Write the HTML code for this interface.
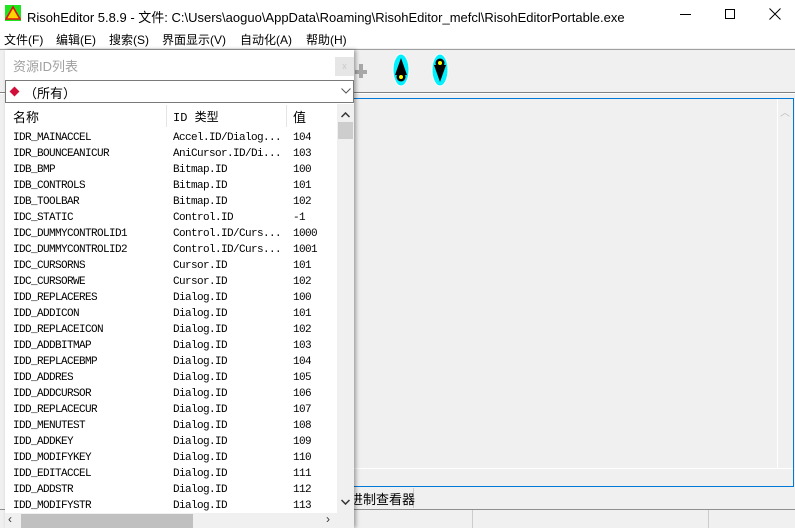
<!DOCTYPE html>
<html><head><meta charset="utf-8"><style>
*{margin:0;padding:0;box-sizing:border-box}
body{width:795px;height:528px;overflow:hidden;background:#f0f0f0;font-family:"Liberation Sans","Noto Sans CJK SC",sans-serif;font-size:12px;color:#000;position:relative}
.abs{position:absolute;white-space:nowrap}
.mono{font-family:"Liberation Mono","Noto Sans CJK SC",monospace;font-size:11px;letter-spacing:-0.6px}
.row{position:absolute;left:0;height:16px;line-height:16px;width:330px}
.row span{position:absolute}
</style></head><body>
<div class="abs" style="left:0;top:0;width:795px;height:30px;background:#fff"></div>
<svg class="abs" style="left:5px;top:5px" width="16" height="16"><rect width="16" height="16" fill="#1ee51e"/><polygon points="8,2 15,14 1,14" fill="#ffd400" stroke="#e01010" stroke-width="1.6"/></svg>
<div class="abs" style="left:27px;top:7px;font-size:13px">RisohEditor 5.8.9 - 文件: C:\Users\aoguo\AppData\Roaming\RisohEditor_mefcl\RisohEditorPortable.exe</div>
<div class="abs" style="left:680px;top:14px;width:11px;height:1px;background:#000"></div>
<div class="abs" style="left:725px;top:9px;width:10px;height:10px;border:1px solid #000"></div>
<svg class="abs" style="left:769px;top:8px" width="12" height="12"><path d="M0.5 0.5L11.5 11.5M11.5 0.5L0.5 11.5" stroke="#000" stroke-width="1"/></svg>
<div class="abs" style="left:0;top:30px;width:795px;height:18px;background:#fff"></div>
<div class="abs" style="left:4px;top:31px">文件(F)</div>
<div class="abs" style="left:56px;top:31px">编辑(E)</div>
<div class="abs" style="left:109px;top:31px">搜索(S)</div>
<div class="abs" style="left:162px;top:31px">界面显示(V)</div>
<div class="abs" style="left:240px;top:31px">自动化(A)</div>
<div class="abs" style="left:306px;top:31px">帮助(H)</div>
<div class="abs" style="left:0;top:49px;width:795px;height:1px;background:#a0a0a0"></div>
<div class="abs" style="left:355px;top:70px;width:12px;height:4px;background:#a8a8a8"></div>
<div class="abs" style="left:359px;top:64px;width:4px;height:14px;background:#a8a8a8"></div>
<svg class="abs" style="left:392px;top:53px" width="18" height="34"><ellipse cx="9" cy="17" rx="8" ry="16" fill="#00f0ff" stroke="#fff"/><polygon points="9,5 15,22 3,22" fill="#000"/><circle cx="9" cy="24" r="4.5" fill="#000"/><circle cx="9" cy="24" r="2" fill="#ff0"/></svg>
<svg class="abs" style="left:431px;top:53px" width="18" height="34"><ellipse cx="9" cy="17" rx="8" ry="16" fill="#00f0ff" stroke="#fff"/><polygon points="9,29 15,12 3,12" fill="#000"/><circle cx="9" cy="10" r="4.5" fill="#000"/><circle cx="9" cy="10" r="2" fill="#ff0"/></svg>
<div class="abs" style="left:0;top:92px;width:795px;height:1px;background:#808080"></div>
<div class="abs" style="left:0;top:93px;width:795px;height:1px;background:#fff"></div>
<div class="abs" style="left:350px;top:98px;width:444px;height:389px;border:1px solid #0078d7;background:#f0f0f0"></div>
<div class="abs" style="left:777px;top:99px;width:16px;height:370px;background:#f0f0f0;border-left:1px solid #fff"></div>
<div class="abs" style="left:780px;top:104px;color:#bbb;font-size:10px">︿</div>
<div class="abs" style="left:351px;top:468px;width:442px;height:1px;background:#fff"></div>
<div class="abs" style="left:340px;top:488px;width:74px;height:20px;border-right:1px solid #ccc;font-size:13px;padding-top:1px;padding-left:10px">进制查看器</div>
<div class="abs" style="left:0;top:509px;width:795px;height:1px;background:#909090"></div>
<div class="abs" style="left:472px;top:510px;width:1px;height:18px;background:#ccc"></div>
<div class="abs" style="left:708px;top:510px;width:1px;height:18px;background:#ccc"></div>
<div class="abs" style="left:5px;top:50px;width:349px;height:478px;background:#fff;box-shadow:2px 0 4px rgba(0,0,0,0.35)"></div>
<div class="abs" style="left:13px;top:56px;font-size:13px;color:#a0a0a0">资源ID列表</div>
<div class="abs" style="left:335px;top:57px;width:19px;height:19px;background:#e6e6e6;color:#c8c8c8;font-size:9px;text-align:center;line-height:18px">x</div>
<div class="abs" style="left:5px;top:80px;width:349px;height:23px;border:1px solid #7a7a7a;background:#fff"></div>
<div class="abs" style="left:11px;top:88px;width:7px;height:7px;background:#d0103a;transform:rotate(45deg)"></div>
<div class="abs" style="left:24px;top:83px;font-size:13px">（所有）</div>
<svg class="abs" style="left:341px;top:88px" width="10" height="6"><path d="M0.5 0.5L5 5L9.5 0.5" stroke="#555" fill="none"/></svg>
<div class="abs" style="left:5px;top:104px;width:349px;height:24px;background:#fff"></div>
<div class="abs" style="left:166px;top:105px;width:1px;height:22px;background:#e5e5e5"></div>
<div class="abs" style="left:286px;top:105px;width:1px;height:22px;background:#e5e5e5"></div>
<div class="abs" style="left:13px;top:107px;font-size:13px">名称</div>
<div class="abs mono" style="left:173px;top:108px;font-size:12px;letter-spacing:0">ID 类型</div>
<div class="abs" style="left:293px;top:107px;font-size:13px">值</div>
<div class="abs" style="left:337px;top:104px;width:17px;height:409px;background:#f0f0f0"></div>
<svg class="abs" style="left:341px;top:112px" width="9" height="6"><path d="M0.5 5L4.5 1L8.5 5" stroke="#333" stroke-width="1.5" fill="none"/></svg>
<div class="abs" style="left:338px;top:122px;width:15px;height:17px;background:#cdcdcd"></div>
<svg class="abs" style="left:341px;top:499px" width="9" height="6"><path d="M0.5 1L4.5 5L8.5 1" stroke="#333" stroke-width="1.5" fill="none"/></svg>
<div class="abs" style="left:5px;top:513px;width:349px;height:15px;background:#f0f0f0"></div>
<div class="abs" style="left:21px;top:514px;width:172px;height:14px;background:#c0c0c0"></div>
<div class="abs" style="left:8px;top:512px;font-size:12px;color:#333">‹</div>
<div class="abs" style="left:326px;top:512px;font-size:12px;color:#333">›</div>
<div class="abs mono" style="left:13px;top:130px;width:324px;height:383px;overflow:hidden">
<div class="row" style="top:0"><span style="left:0">IDR_MAINACCEL</span><span style="left:160px">Accel.ID/Dialog...</span><span style="left:280px">104</span></div>
<div class="row" style="top:16px"><span style="left:0">IDR_BOUNCEANICUR</span><span style="left:160px">AniCursor.ID/Di...</span><span style="left:280px">103</span></div>
<div class="row" style="top:32px"><span style="left:0">IDB_BMP</span><span style="left:160px">Bitmap.ID</span><span style="left:280px">100</span></div>
<div class="row" style="top:48px"><span style="left:0">IDB_CONTROLS</span><span style="left:160px">Bitmap.ID</span><span style="left:280px">101</span></div>
<div class="row" style="top:64px"><span style="left:0">IDB_TOOLBAR</span><span style="left:160px">Bitmap.ID</span><span style="left:280px">102</span></div>
<div class="row" style="top:80px"><span style="left:0">IDC_STATIC</span><span style="left:160px">Control.ID</span><span style="left:280px">-1</span></div>
<div class="row" style="top:96px"><span style="left:0">IDC_DUMMYCONTROLID1</span><span style="left:160px">Control.ID/Curs...</span><span style="left:280px">1000</span></div>
<div class="row" style="top:112px"><span style="left:0">IDC_DUMMYCONTROLID2</span><span style="left:160px">Control.ID/Curs...</span><span style="left:280px">1001</span></div>
<div class="row" style="top:128px"><span style="left:0">IDC_CURSORNS</span><span style="left:160px">Cursor.ID</span><span style="left:280px">101</span></div>
<div class="row" style="top:144px"><span style="left:0">IDC_CURSORWE</span><span style="left:160px">Cursor.ID</span><span style="left:280px">102</span></div>
<div class="row" style="top:160px"><span style="left:0">IDD_REPLACERES</span><span style="left:160px">Dialog.ID</span><span style="left:280px">100</span></div>
<div class="row" style="top:176px"><span style="left:0">IDD_ADDICON</span><span style="left:160px">Dialog.ID</span><span style="left:280px">101</span></div>
<div class="row" style="top:192px"><span style="left:0">IDD_REPLACEICON</span><span style="left:160px">Dialog.ID</span><span style="left:280px">102</span></div>
<div class="row" style="top:208px"><span style="left:0">IDD_ADDBITMAP</span><span style="left:160px">Dialog.ID</span><span style="left:280px">103</span></div>
<div class="row" style="top:224px"><span style="left:0">IDD_REPLACEBMP</span><span style="left:160px">Dialog.ID</span><span style="left:280px">104</span></div>
<div class="row" style="top:240px"><span style="left:0">IDD_ADDRES</span><span style="left:160px">Dialog.ID</span><span style="left:280px">105</span></div>
<div class="row" style="top:256px"><span style="left:0">IDD_ADDCURSOR</span><span style="left:160px">Dialog.ID</span><span style="left:280px">106</span></div>
<div class="row" style="top:272px"><span style="left:0">IDD_REPLACECUR</span><span style="left:160px">Dialog.ID</span><span style="left:280px">107</span></div>
<div class="row" style="top:288px"><span style="left:0">IDD_MENUTEST</span><span style="left:160px">Dialog.ID</span><span style="left:280px">108</span></div>
<div class="row" style="top:304px"><span style="left:0">IDD_ADDKEY</span><span style="left:160px">Dialog.ID</span><span style="left:280px">109</span></div>
<div class="row" style="top:320px"><span style="left:0">IDD_MODIFYKEY</span><span style="left:160px">Dialog.ID</span><span style="left:280px">110</span></div>
<div class="row" style="top:336px"><span style="left:0">IDD_EDITACCEL</span><span style="left:160px">Dialog.ID</span><span style="left:280px">111</span></div>
<div class="row" style="top:352px"><span style="left:0">IDD_ADDSTR</span><span style="left:160px">Dialog.ID</span><span style="left:280px">112</span></div>
<div class="row" style="top:368px"><span style="left:0">IDD_MODIFYSTR</span><span style="left:160px">Dialog.ID</span><span style="left:280px">113</span></div>
</div>
</body></html>
